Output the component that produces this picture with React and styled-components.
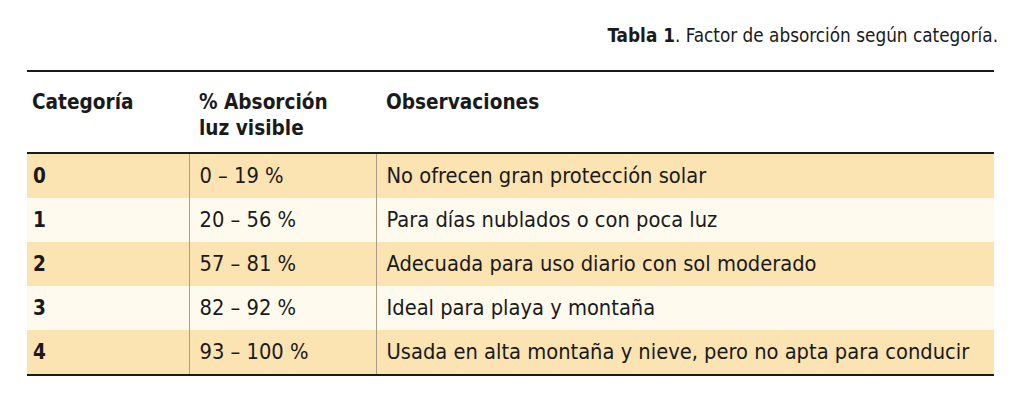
import React from "react";
import styled, { createGlobalStyle } from "styled-components";

const GlobalStyle = createGlobalStyle`
  body {
    margin: 0;
    background: #ffffff;
    font-family: "DejaVu Sans Condensed", "DejaVu Sans", sans-serif;
    color: #1a1a1a;
  }
`;

const Page = styled.div`
  padding: 23px 30px 0 27px;
`;

const Caption = styled.p`
  margin: 0 -4px 22px 0;
  text-align: right;
  font-size: 18.8px;
  line-height: 25px;
  b {
    font-weight: bold;
  }
`;

const Table = styled.table`
  width: 100%;
  border-collapse: collapse;
  border-top: 2px solid #1a1a1a;
  border-bottom: 2px solid #1a1a1a;
`;

const HeadCell = styled.th`
  text-align: left;
  vertical-align: top;
  font-size: 20.6px;
  font-weight: bold;
  line-height: 26px;
  padding: 17px 10px 0;
  height: 82px;
  box-sizing: border-box;
  border-bottom: 2px solid #1a1a1a;
  width: ${(p) => p.$w || "auto"};
  &:first-child {
    padding-left: 5px;
  }
`;

const Row = styled.tr`
  background: ${(p) => (p.$tinted ? "#fce3b2" : "#fefbee")};
  & + & td {
    border-top: 1px solid #cfc8b6;
  }
`;

const Cell = styled.td`
  height: 44px;
  padding: 0 10px;
  font-size: 21.7px;
  line-height: 24px;
  font-weight: ${(p) => (p.$bold ? "bold" : "normal")};
  & + & {
    border-left: 1px solid #a89d88;
  }
  &:first-child {
    padding-left: 6px;
    font-size: 20.6px;
  }
`;

const rows = [
  ["0", "0 – 19 %", "No ofrecen gran protección solar"],
  ["1", "20 – 56 %", "Para días nublados o con poca luz"],
  ["2", "57 – 81 %", "Adecuada para uso diario con sol moderado"],
  ["3", "82 – 92 %", "Ideal para playa y montaña"],
  ["4", "93 – 100 %", "Usada en alta montaña y nieve, pero no apta para conducir"],
];

export default function App() {
  return (
    <Page>
      <GlobalStyle />
      <Caption>
        <b>Tabla 1</b>. Factor de absorción según categoría.
      </Caption>
      <Table>
        <thead>
          <tr>
            <HeadCell $w="162px">Categoría</HeadCell>
            <HeadCell $w="187px">
              % Absorción
              <br />
              luz visible
            </HeadCell>
            <HeadCell>Observaciones</HeadCell>
          </tr>
        </thead>
        <tbody>
          {rows.map((r, i) => (
            <Row key={r[0]} $tinted={i % 2 === 0}>
              <Cell $bold>{r[0]}</Cell>
              <Cell>{r[1]}</Cell>
              <Cell>{r[2]}</Cell>
            </Row>
          ))}
        </tbody>
      </Table>
    </Page>
  );
}
